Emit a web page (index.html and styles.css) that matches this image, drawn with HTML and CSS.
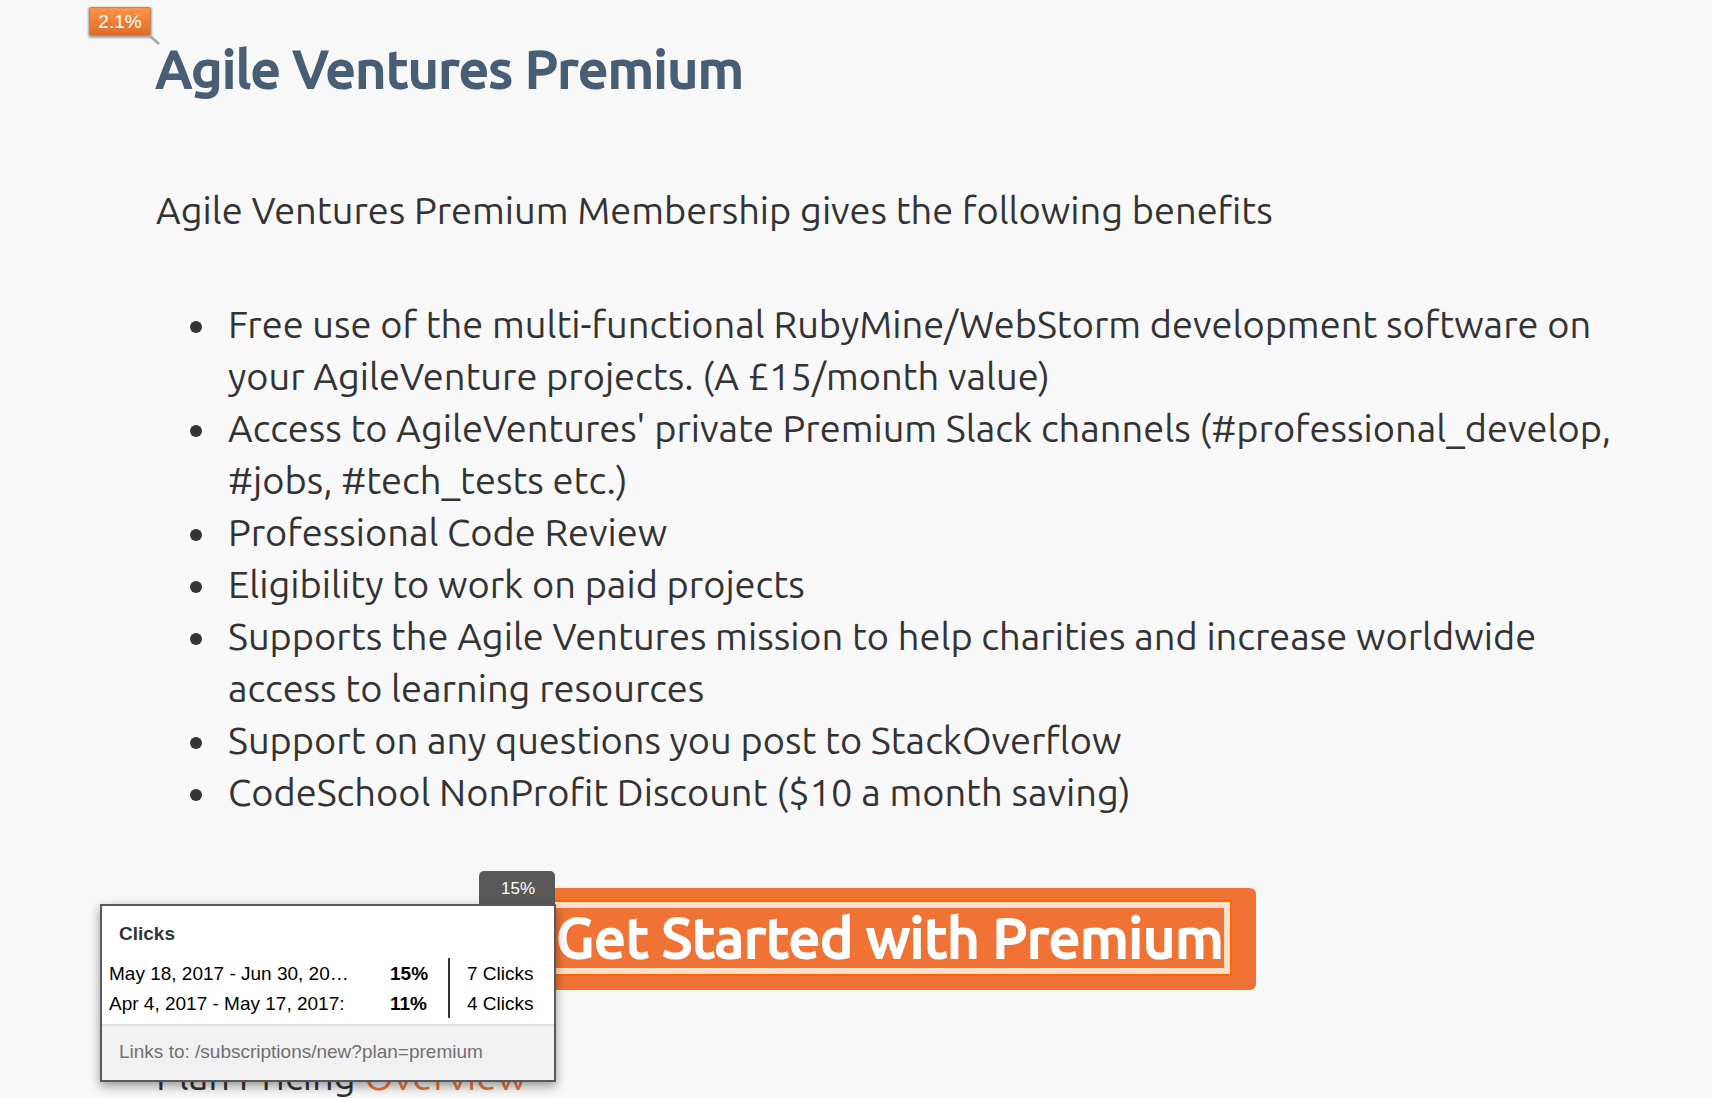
FILE: index.html
```
<!DOCTYPE html>
<html lang="en">
<head>
<meta charset="utf-8">
<title>Agile Ventures Premium</title>
<link rel="stylesheet" href="styles.css">
</head>
<body>
<main class="page">
  <div class="click-badge">2.1%
    <svg class="badge-tail" width="12" height="10" viewBox="0 0 12 10" aria-hidden="true"><path d="M1 0 10 8" fill="none" stroke="#aaa" stroke-width="3"/></svg>
  </div>
  <h1 class="title">Agile Ventures Premium</h1>
  <p class="intro">Agile Ventures Premium Membership gives the following benefits</p>
  <ul class="benefits">
    <li>Free use of the multi-functional RubyMine/WebStorm development software on your AgileVenture projects. (A £15/month value)</li>
    <li>Access to AgileVentures' private Premium Slack channels (#professional_develop, #jobs, #tech_tests etc.)</li>
    <li>Professional Code Review</li>
    <li>Eligibility to work on paid projects</li>
    <li>Supports the Agile Ventures mission to help charities and increase worldwide access to learning resources</li>
    <li>Support on any questions you post to StackOverflow</li>
    <li>CodeSchool NonProfit Discount ($10 a month saving)</li>
  </ul>
  <div class="action">
    <button class="start" type="button"><span class="start-label">Get Started with Premium</span></button>
  </div>
  <p class="pricing">Plan Pricing <a href="#overview">Overview</a></p>

  <aside class="popup">
    <div class="popup-tab">15%</div>
    <div class="popup-box">
      <h2 class="popup-title">Clicks</h2>
      <table class="stats">
        <tr><td class="range">May 18, 2017 - Jun 30, 2017:</td><td class="share">15%</td><td class="count">7 Clicks</td></tr>
        <tr><td class="range">Apr 4, 2017 - May 17, 2017:</td><td class="share">11%</td><td class="count">4 Clicks</td></tr>
      </table>
      <div class="popup-foot">Links to: /subscriptions/new?plan=premium</div>
    </div>
  </aside>
</main>
</body>
</html>
```
FILE: styles.css
```
* { box-sizing: border-box; }

body {
  margin: 0;
  background: #f8f8f8;
  color: #333;
  font-family: Ubuntu, "Noto Sans", sans-serif;
  font-size: 38px;
  line-height: 52px;
}

.page {
  position: relative;
  padding: 38px 88px 0 156px;
}

.title {
  margin: 0 0 84px;
  color: #485e75;
  font-size: 53px;
  font-weight: 500;
  line-height: 62px;
  -webkit-text-stroke: 2px;
}

.intro { margin: 0 0 62px; }

.benefits {
  margin: 0 0 70px;
  padding-left: 64px;
}

.benefits li { padding-left: 8px; }

.action {
  display: flex;
  justify-content: center;
  margin-bottom: 60px;
}

.start {
  padding: 12px 24px 14px;
  border: 0;
  border-radius: 6px;
  background: #f07335;
  color: #fff;
  font-family: inherit;
  font-size: 56px;
  font-weight: 500;
  line-height: 60px;
  -webkit-text-stroke: 2px;
}

.start-label {
  display: block;
  padding: 6px;
  border: 2px solid #f60;
  box-shadow: inset 0 0 0 6px #fee0cc;
  white-space: nowrap;
}

.pricing { margin: 0; }
.pricing a { color: #f07335; text-decoration: none; }

.click-badge {
  position: absolute;
  top: 7px;
  left: 89px;
  width: 62px;
  height: 29px;
  border: 1px solid #b98a68;
  border-radius: 2px;
  background: linear-gradient(#ff9447, #dc6d2a);
  box-shadow: 0 1px 2px 1px #aaa;
  color: #fff;
  font: 19px/27px "Liberation Sans", sans-serif;
  text-align: center;
}

.badge-tail {
  position: absolute;
  top: 28px;
  left: 59px;
}

.popup {
  position: absolute;
  top: 871px;
  left: 100px;
  width: 456px;
  color: #000;
  font: 19px/30px "Liberation Sans", sans-serif;
}

.popup-tab {
  width: 76px;
  height: 33px;
  margin: 0 1px 0 auto;
  padding-left: 22px;
  border-radius: 5px 5px 0 0;
  background: #595959;
  color: #fff;
  font-size: 17px;
  line-height: 36px;
}

.popup-box {
  border: 2px solid #595959;
  background: #fff;
  box-shadow: 0 4px 10px rgba(0, 0, 0, .4);
}

.popup-title {
  margin: 0;
  padding: 13px 17px 9px;
  color: #333;
  font-size: 19px;
  line-height: 30px;
}

.stats {
  width: 100%;
  margin-bottom: 6px;
  border-collapse: collapse;
  line-height: 28px;
  table-layout: fixed;
}

.stats td { padding: 2px 0 0; }

.stats .range {
  width: 252px;
  padding-left: 7px;
  overflow: hidden;
  text-overflow: ellipsis;
  white-space: nowrap;
}

.stats .share {
  width: 95px;
  padding-left: 36px;
  border-right: 2px solid #333;
  font-weight: bold;
}

.stats .count { padding-left: 17px; }

.popup-foot {
  padding: 11px 17px 13px;
  border-top: 2px solid #e2e2e2;
  background: #f1f1f1;
  color: #707070;
}
```
